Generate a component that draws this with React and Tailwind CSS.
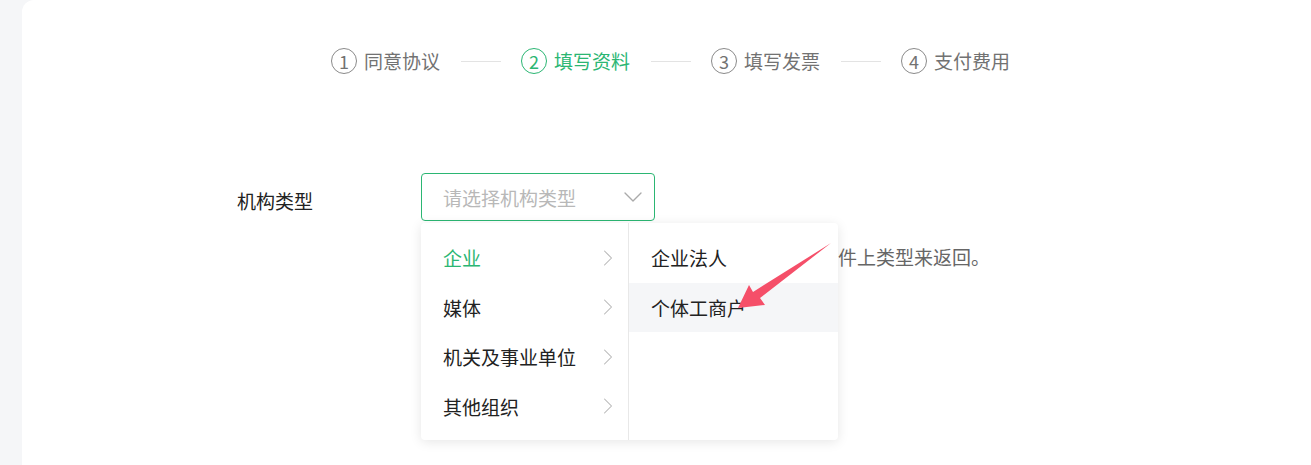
import { ChevronDown, ChevronRight } from "lucide-react";

const steps = [
  { n: 1, label: "同意协议" },
  { n: 2, label: "填写资料", active: true },
  { n: 3, label: "填写发票" },
  { n: 4, label: "支付费用" },
];

const types = [
  { label: "企业", active: true },
  { label: "媒体" },
  { label: "机关及事业单位" },
  { label: "其他组织" },
];

const subTypes = [{ label: "企业法人" }, { label: "个体工商户", hover: true }];

const Step = ({ step, last }) => (
  <div className="flex items-center">
    <div
      className={`flex h-[26px] w-[26px] items-center justify-center rounded-full border-[1.5px] text-[18px] leading-none ${
        step.active ? "border-[#2bb673] text-[#2bb673]" : "border-[#8a8a8a] text-[#727272]"
      }`}
    >
      {step.n}
    </div>
    <span className={`ml-[7px] text-[19px] leading-[26px] ${step.active ? "text-[#2bb673]" : "text-[#727272]"}`}>{step.label}</span>
    {!last && <div className="ml-[21px] mr-[20px] h-px w-[40px] bg-[#e3e3e3]"></div>}
  </div>
);

export default function App() {
  return (
    <div className="flex h-[465px] w-[1311px] overflow-hidden bg-[#f5f6f8] pl-[22px] font-['Noto_Sans_CJK_SC','Noto_Sans',sans-serif]">
      <div className="flex-1 rounded-tl-[12px] bg-white">
        {/* 步骤条 */}
        <div className="flex justify-center pl-[8px] pt-[48px]">
          {steps.map((s, i) => (
            <Step key={s.n} step={s} last={i === steps.length - 1} />
          ))}
        </div>

        {/* 表单 */}
        <div className="mt-[99px] flex pl-[215px]">
          <div className="w-[184px] pt-[17px] text-[19px] leading-[22px] text-[#222]">机构类型</div>
          <div className="relative">
            <div className="flex h-[48px] w-[234px] items-center justify-between rounded-[4px] border border-[#2bb673] pl-[21px] pr-[5px]">
              <span className="text-[19px] leading-none text-[#b8b8b8]">请选择机构类型</span>
              <ChevronDown className="h-[32px] w-[32px] text-[#aaa]" strokeWidth={1} />
            </div>
            <div className="ml-[417px] mt-[25px] whitespace-nowrap text-[19px] leading-[22px] text-[#666]">件上类型来返回。</div>

            {/* 级联下拉 */}
            <div className="absolute left-0 top-[50px] flex h-[217px] w-[417px] rounded-[4px] bg-white shadow-[0_2px_12px_rgba(0,0,0,0.1)]">
              <div className="w-[208px] border-r border-[#e8e8e8] pt-[10px]">
                {types.map((t) => (
                  <div key={t.label} className="flex h-[49.5px] items-center justify-between pl-[22px] pr-[6px]">
                    <span className={`text-[19px] leading-none ${t.active ? "text-[#2bb673]" : "text-[#222]"}`}>{t.label}</span>
                    <ChevronRight className="h-[28px] w-[28px] text-[#b5b5b5]" strokeWidth={0.9} />
                  </div>
                ))}
              </div>
              <div className="flex-1 pt-[10px]">
                {subTypes.map((t) => (
                  <div key={t.label} className={`flex h-[49.5px] items-center pl-[22px] ${t.hover ? "bg-[#f5f6f8]" : ""}`}>
                    <span className="text-[19px] leading-none text-[#222]">{t.label}</span>
                  </div>
                ))}
              </div>
            </div>
          </div>
        </div>
      </div>

      {/* 标注箭头 */}
      <svg className="pointer-events-none absolute left-0 top-0" width="1311" height="465">
        <polygon points="831,243 753,292 749,285 738,308 765,305 760,298" fill="#f54f69" />
      </svg>
    </div>
  );
}
